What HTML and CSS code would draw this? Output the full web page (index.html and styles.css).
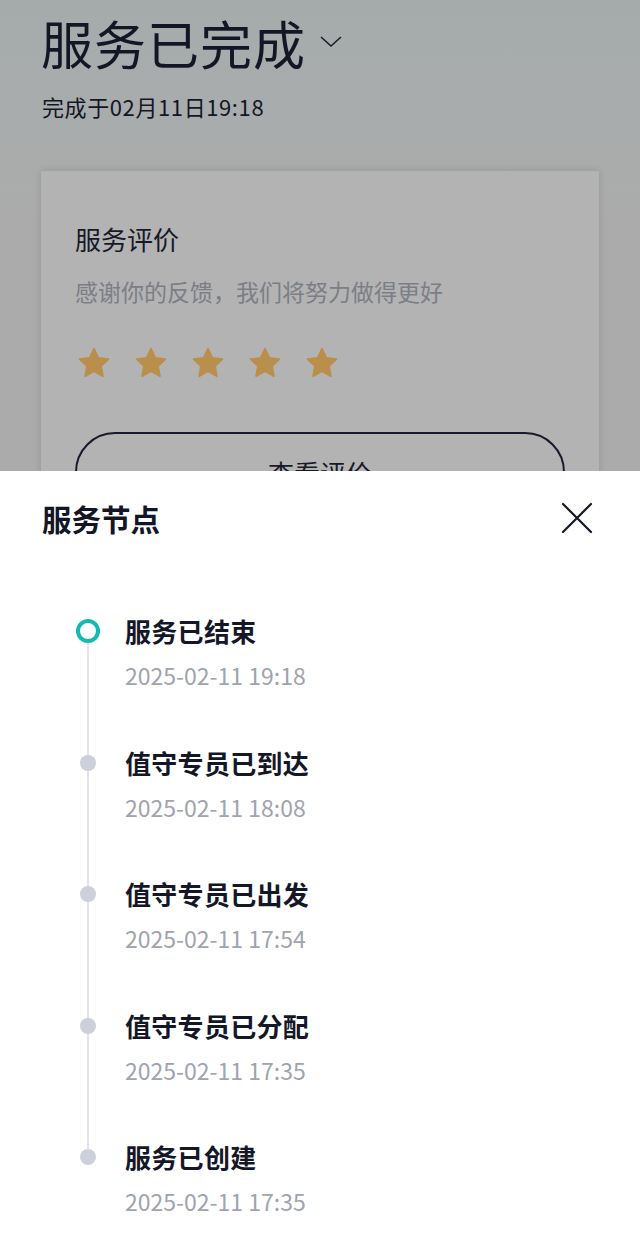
FILE: index.html
```html
<!DOCTYPE html>
<html lang="zh-CN">
<head>
<meta charset="utf-8">
<link rel="stylesheet" href="styles.css">
</head>
<body>
<div class="page">
  <header class="head">
    <div class="title-row">
      <h1 class="title">服务已完成</h1>
      <svg class="chev" width="22" height="12" viewBox="0 0 22 12"><path d="M1 1 L11 10 L21 1" fill="none" stroke="#1c1e2a" stroke-width="1.6"/></svg>
    </div>
    <p class="done-at">完成于02月11日19:18</p>
  </header>
  <section class="card">
    <h2 class="card-title">服务评价</h2>
    <p class="card-sub">感谢你的反馈，我们将努力做得更好</p>
    <div class="stars">
      <svg class="star" viewBox="0 0 24 24"><path d="M12 1.8l3.1 6.6 7.1.9-5.2 4.9 1.3 7.1L12 17.8l-6.3 3.5 1.3-7.1L1.8 9.3l7.1-.9z" fill="#b98f4b" stroke="#b98f4b" stroke-width="1.2" stroke-linejoin="round"/></svg>
      <svg class="star" viewBox="0 0 24 24"><path d="M12 1.8l3.1 6.6 7.1.9-5.2 4.9 1.3 7.1L12 17.8l-6.3 3.5 1.3-7.1L1.8 9.3l7.1-.9z" fill="#b98f4b" stroke="#b98f4b" stroke-width="1.2" stroke-linejoin="round"/></svg>
      <svg class="star" viewBox="0 0 24 24"><path d="M12 1.8l3.1 6.6 7.1.9-5.2 4.9 1.3 7.1L12 17.8l-6.3 3.5 1.3-7.1L1.8 9.3l7.1-.9z" fill="#b98f4b" stroke="#b98f4b" stroke-width="1.2" stroke-linejoin="round"/></svg>
      <svg class="star" viewBox="0 0 24 24"><path d="M12 1.8l3.1 6.6 7.1.9-5.2 4.9 1.3 7.1L12 17.8l-6.3 3.5 1.3-7.1L1.8 9.3l7.1-.9z" fill="#b98f4b" stroke="#b98f4b" stroke-width="1.2" stroke-linejoin="round"/></svg>
      <svg class="star" viewBox="0 0 24 24"><path d="M12 1.8l3.1 6.6 7.1.9-5.2 4.9 1.3 7.1L12 17.8l-6.3 3.5 1.3-7.1L1.8 9.3l7.1-.9z" fill="#b98f4b" stroke="#b98f4b" stroke-width="1.2" stroke-linejoin="round"/></svg>
    </div>
    <button class="btn">查看评价</button>
  </section>

  <div class="sheet">
    <div class="sheet-head">
      <h3 class="sheet-title">服务节点</h3>
      <svg class="close" width="32" height="32" viewBox="0 0 32 32"><path d="M2 2 L30 30 M30 2 L2 30" stroke="#151827" stroke-width="2.2" stroke-linecap="round"/></svg>
    </div>
    <ol class="timeline">
      <li class="node current">
        <span class="dot"></span>
        <div class="node-title">服务已结束</div>
        <div class="node-time">2025-02-11 19:18</div>
      </li>
      <li class="node">
        <span class="dot"></span>
        <div class="node-title">值守专员已到达</div>
        <div class="node-time">2025-02-11 18:08</div>
      </li>
      <li class="node">
        <span class="dot"></span>
        <div class="node-title">值守专员已出发</div>
        <div class="node-time">2025-02-11 17:54</div>
      </li>
      <li class="node">
        <span class="dot"></span>
        <div class="node-title">值守专员已分配</div>
        <div class="node-time">2025-02-11 17:35</div>
      </li>
      <li class="node last">
        <span class="dot"></span>
        <div class="node-title">服务已创建</div>
        <div class="node-time">2025-02-11 17:35</div>
      </li>
    </ol>
  </div>
</div>
</body>
</html>
```

FILE: styles.css
```css
* { box-sizing: border-box; }
html, body {
  margin: 0;
  padding: 0;
}
body {
  width: 640px;
  height: 1245px;
  overflow: hidden;
  font-family: "Noto Sans CJK SC", "Noto Sans", sans-serif;
  color: #161827;
}
.page {
  position: relative;
  width: 640px;
  height: 1245px;
  background: linear-gradient(180deg, #a5abab 0px, #a9acac 120px, #ababab 220px, #ababab 100%);
  padding: 0 41px;
}
.head {
  padding-top: 8px;
}
.title-row {
  display: flex;
  align-items: center;
  gap: 14px;
}
.title {
  margin: 0;
  font-size: 52px;
  line-height: 70px;
  font-weight: 400;
  color: #141626;
  letter-spacing: 1px;
}
.chev {
  margin-top: -2px;
}
.done-at {
  margin: 13px 0 0 1px;
  font-size: 22px;
  line-height: 30px;
  letter-spacing: 0.6px;
  color: #141626;
}
.card {
  margin-top: 50px;
  background: #b3b3b3;
  box-shadow: 0 0 8px rgba(0,0,0,0.12);
  padding: 50px 33px 40px 34px;
  height: 340px;
}
.card-title {
  margin: 0;
  font-size: 26px;
  line-height: 36px;
  font-weight: 400;
  color: #171927;
}
.card-sub {
  margin: 18px 0 0;
  font-size: 23px;
  line-height: 32px;
  color: #7c7e86;
}
.stars {
  display: flex;
  gap: 23px;
  margin-top: 39px;
  margin-left: 2px;
}
.star {
  width: 34px;
  height: 34px;
  display: block;
}
.btn {
  display: block;
  margin-top: 52px;
  width: 490px;
  height: 80px;
  border: 2px solid #171a2a;
  border-radius: 40px;
  background: transparent;
  font-family: inherit;
  font-size: 26px;
  color: #171927;
}
.sheet {
  position: absolute;
  left: 0;
  right: 0;
  top: 471px;
  bottom: 0;
  background: #ffffff;
  padding: 0 47px 0 42px;
}
.sheet-head {
  display: flex;
  justify-content: space-between;
  align-items: center;
  height: 94px;
}
.sheet-title {
  margin: 0;
  font-size: 29.5px;
  font-weight: 700;
  color: #131626;
}
.close {
  display: block;
}
.timeline {
  list-style: none;
  margin: 44px 0 0;
  padding: 0 0 0 83px;
}
.node {
  position: relative;
  height: 131.5px;
}
.node::before {
  content: "";
  position: absolute;
  left: -38px;
  top: 22px;
  width: 2px;
  height: 131.5px;
  background: #e4e5ea;
}
.node.last::before { display: none; }
.dot {
  position: absolute;
  left: -45px;
  top: 14px;
  width: 16px;
  height: 16px;
  border-radius: 50%;
  background: #cdd0da;
}
.node.current .dot {
  left: -49px;
  top: 10px;
  width: 24px;
  height: 24px;
  background: #fff;
  border: 4.5px solid #16b8b6;
}
.node-title {
  font-size: 26px;
  line-height: 44px;
  font-weight: 700;
  color: #141727;
  letter-spacing: 0.3px;
}
.node-time {
  margin-top: 2px;
  font-size: 23px;
  line-height: 40px;
  color: #a0a3b0;
}
```
